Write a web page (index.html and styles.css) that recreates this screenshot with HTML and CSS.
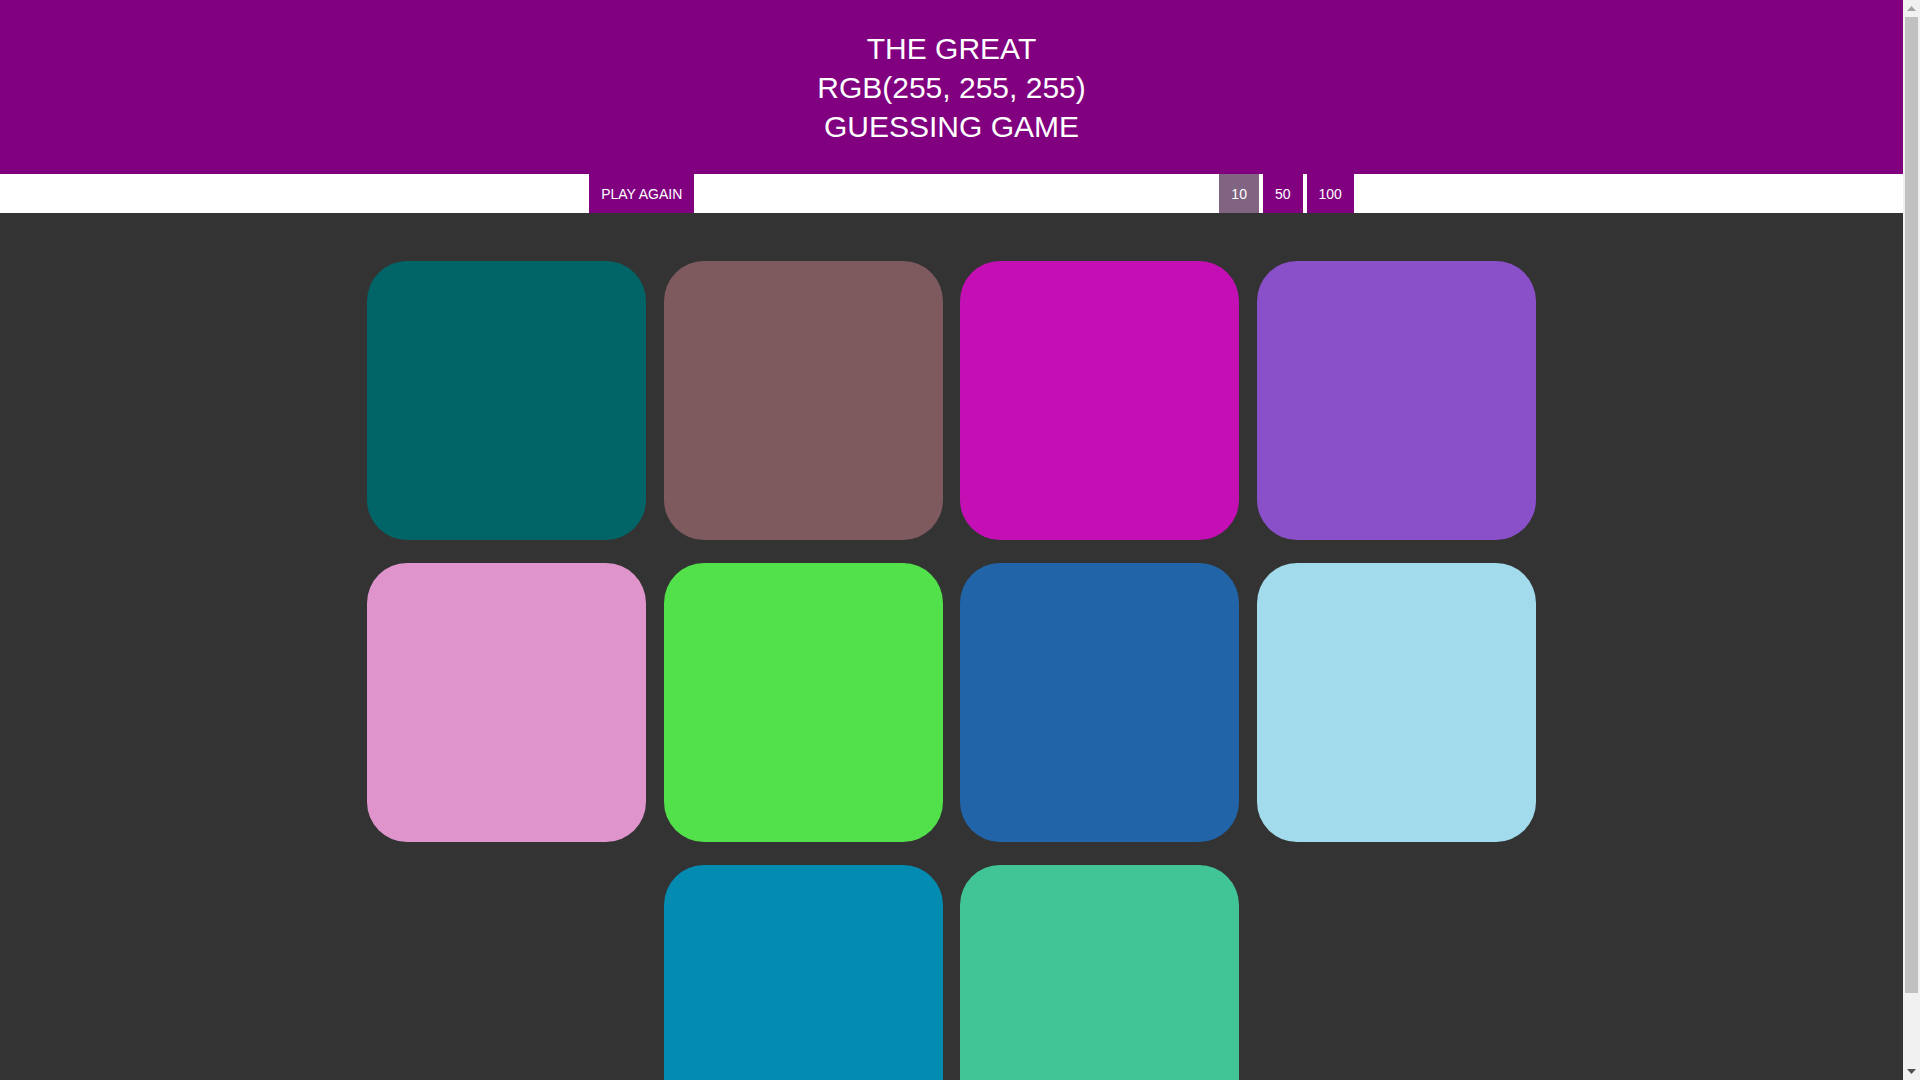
FILE: index.html
```html
<!DOCTYPE html>
<html lang="en">
<head>
<meta charset="utf-8">
<title>Color Game</title>
<link rel="stylesheet" href="styles.css">
</head>
<body>
<div class="page">
  <header class="banner">
    <h1 class="title">
      <span class="title-line">THE GREAT</span>
      <span class="title-line">RGB(255, 255, 255)</span>
      <span class="title-line">GUESSING GAME</span>
    </h1>
  </header>
  <nav class="stripe">
    <button class="btn">PLAY AGAIN</button>
    <span class="message"></span>
    <button class="btn mode selected">10</button>
    <button class="btn mode">50</button>
    <button class="btn mode">100</button>
  </nav>
  <main class="board">
    <div class="square" style="background:#016567"></div>
    <div class="square" style="background:#7e5a5f"></div>
    <div class="square" style="background:#c30fb3"></div>
    <div class="square" style="background:#8a50c9"></div>
    <div class="square" style="background:#df95cc"></div>
    <div class="square" style="background:#52e14b"></div>
    <div class="square" style="background:#2264a8"></div>
    <div class="square" style="background:#a2dbec"></div>
    <div class="square" style="background:#038bb1"></div>
    <div class="square" style="background:#42c596"></div>
  </main>
</div>
<div class="scrollbar" aria-hidden="true">
  <div class="sb-arrow">
    <svg width="9" height="5" viewBox="0 0 9 5"><path d="M0 5 L4.5 0 L9 5 Z" fill="#a3a3a3"/></svg>
  </div>
  <div class="sb-track"><div class="sb-thumb"></div></div>
  <div class="sb-arrow">
    <svg width="9" height="5" viewBox="0 0 9 5"><path d="M0 0 L9 0 L4.5 5 Z" fill="#505050"/></svg>
  </div>
</div>
</body>
</html>
```
FILE: styles.css
```css
html, body {
  margin: 0;
  padding: 0;
}
body {
  background: #333333;
  font-family: "Liberation Sans", Arial, sans-serif;
}
.page {
  margin-right: 17px;
}
.banner {
  background: #800080;
  color: #ffffff;
  text-align: center;
  padding: 29px 0 28px;
}
.title {
  margin: 0;
  font-size: 30px;
  line-height: 39px;
  font-weight: normal;
}
.title-line {
  display: block;
}
.stripe {
  background: #ffffff;
  height: 39px;
  display: flex;
  justify-content: center;
  gap: 4px;
  padding-left: 40px;
}
.btn {
  border: none;
  margin: 0;
  background: #800080;
  color: #ffffff;
  font-family: "Liberation Sans", Arial, sans-serif;
  font-size: 14px;
  line-height: 38px;
  height: 39px;
  padding: 1px 12px 0;
  cursor: pointer;
}
.btn.selected {
  background: #806482;
}
.message {
  width: 517px;
}
.board {
  width: 1169px;
  margin: 0 auto;
  padding: 48px 0 40px;
  display: flex;
  flex-wrap: wrap;
  justify-content: center;
  gap: 23px 17.5px;
}
.square {
  width: 279px;
  height: 279px;
  border-radius: 40px;
}
.scrollbar {
  position: fixed;
  top: 0;
  right: 0;
  bottom: 0;
  width: 17px;
  background: #f1f1f1;
  display: flex;
  flex-direction: column;
}
.sb-arrow {
  height: 17px;
  display: flex;
  align-items: center;
  justify-content: center;
}
.sb-track {
  flex: 1;
  padding: 0 2px 70px;
}
.sb-thumb {
  height: 100%;
  background: #c1c1c1;
}
```
